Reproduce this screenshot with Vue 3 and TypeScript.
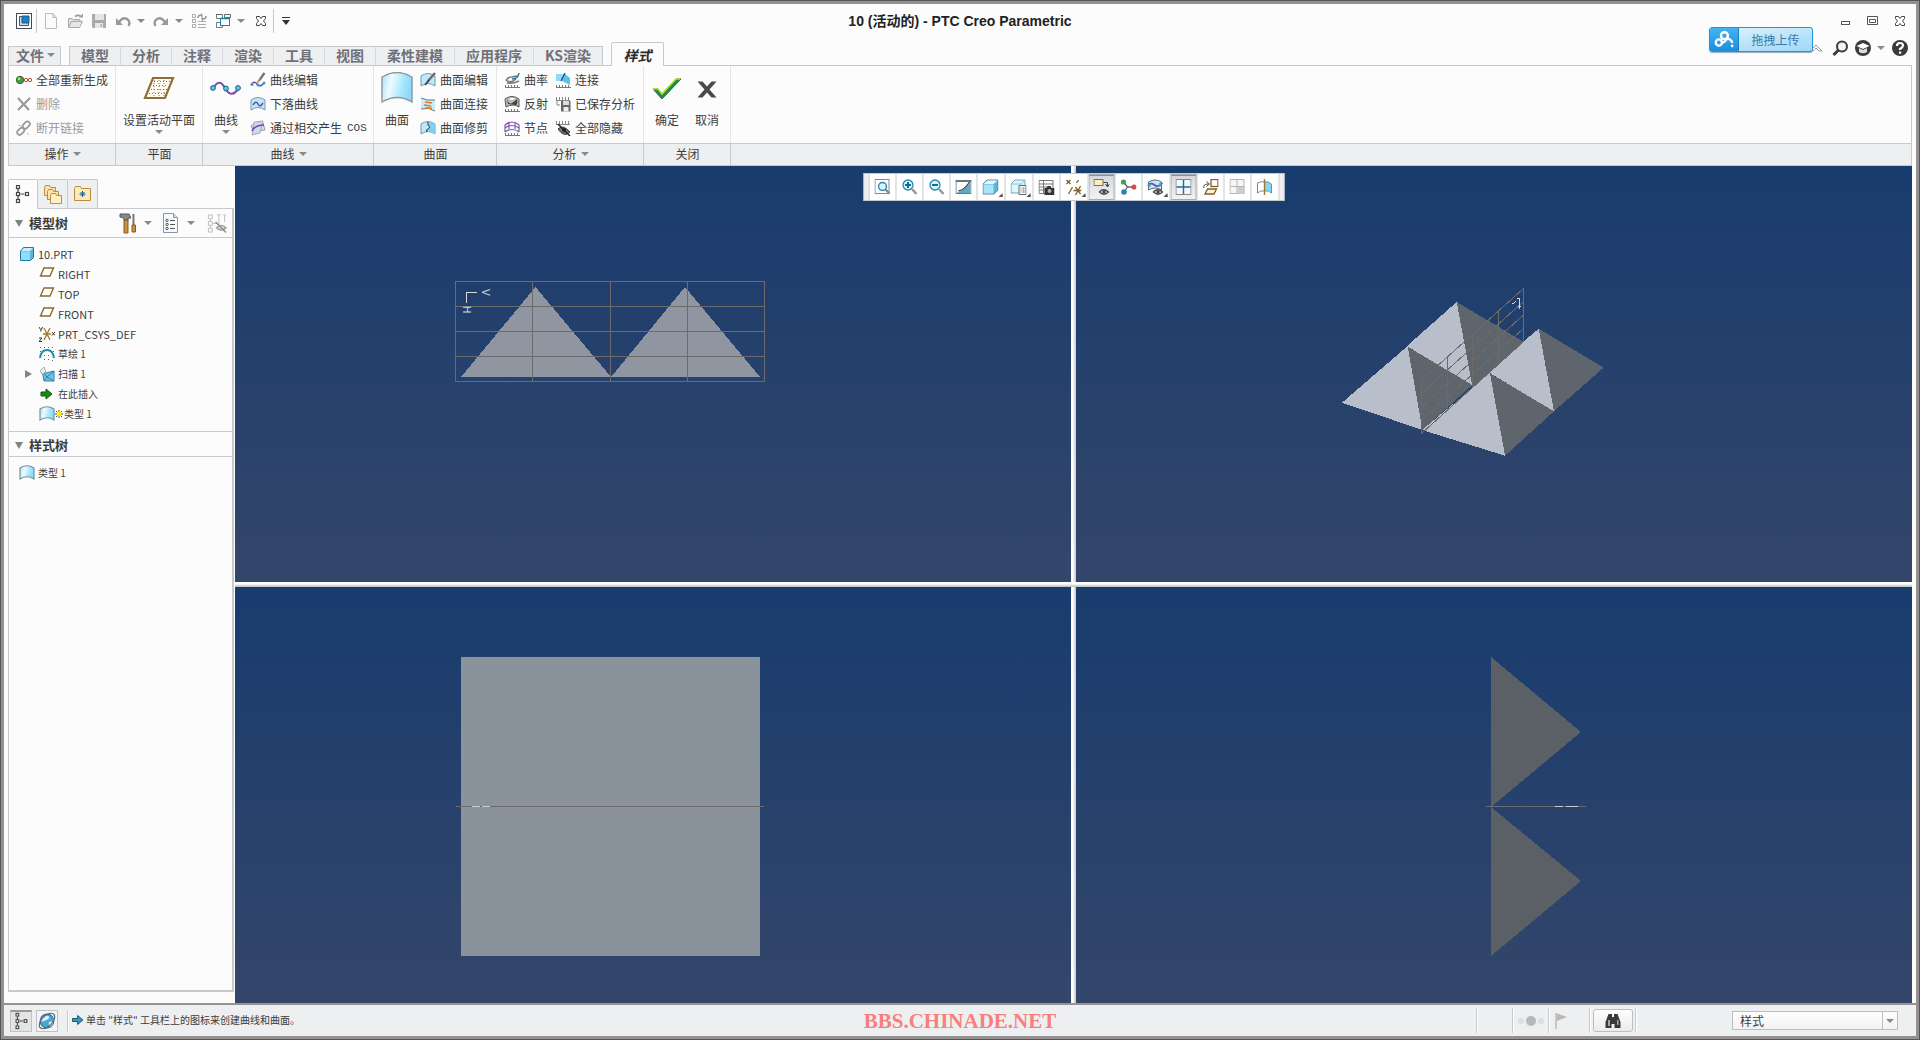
<script setup lang="ts">
import { ref } from 'vue'

interface Command {
  icon: string
  label: string
  suffix?: string
  disabled?: boolean
}

interface TreeItem {
  icon: string
  label: string
  cjk?: boolean
  expandable?: boolean
  fresh?: boolean
}

interface ViewTool {
  icon: string
  title: string
  menu?: boolean
  pressed?: boolean
}

const grad =
  '<linearGradient id="sky" x1="0" y1="0" x2="1" y2=".2"><stop offset="0" stop-color="#a6e0f7"/><stop offset=".35" stop-color="#effbff"/><stop offset=".8" stop-color="#9fe4fd"/><stop offset="1" stop-color="#8ddaf8"/></linearGradient>'

const ruler = '<path d="M1 15.5h15M1.5 15v-2M4.5 15v-2M7.5 15v-2M10.5 15v-2M13.5 15v-2" stroke="#777" fill="none"/>'
const rulerTop = '<path d="M1 4.5h14M1.5 4v-3M4.5 4v-3M7.5 4v-3M10.5 4v-3M13.5 4v-3" stroke="#888" fill="none"/>'
const eye = '<path d="M6 13q4-4.500 9 0q-4.500 4.500-9 0z" fill="#fff" stroke="#444" stroke-width="1.300"/><circle cx="10.500" cy="13" r="1.800" fill="#444"/>'
const sheet = '<path d="M1 4q7-5 14 0v10q-7-5-14 0z" fill="#bdeafa" stroke="#7b98a6"/>'

const icons: Record<string, string> = {
  app: '<rect x=".5" y=".5" width="15" height="15" fill="#fff" stroke="#3d4c5c"/><path d="M3.500 3.500h9v9h-9z" fill="#d8dde0" stroke="#35566e"/><path d="M6 3h7v7h-7z" fill="#0a86d8" stroke="#35566e"/>',
  newDoc: '<path d="M2.500.5h7.500l3.500 4v11h-11z" fill="#fafafa" stroke="#bbb"/><path d="M10 .5v4h3.500" fill="#ddd" stroke="#bbb"/>',
  open: '<path d="M1.500 14V5.500h4l1 1h6.500v2" fill="#ddd" stroke="#aaa"/><path d="M1.500 14.500l3-6h11l-3 6z" fill="#e6e6e6" stroke="#aaa"/><path d="M8 3.500q3-2 5.500-.5" stroke="#999" stroke-width="1.600" fill="none"/><path d="M12 4.500h4v-4z" fill="#999"/>',
  save: '<path d="M1 1h14v14h-13l-1-1z" fill="#aaa"/><path d="M4 1h9v6h-9z" fill="#e6e6e6"/><path d="M4 10h8v5h-8z" fill="#e8e8e8"/><path d="M9.500 11h1.500v3h-1.500z" fill="#aaa"/>',
  undo: '<path d="M4 9q4-5.500 8-3t1.500 7" fill="none" stroke="#999" stroke-width="2.400"/><path d="M1 5v7h7z" fill="#999"/>',
  redo: '<path d="M12 9q-4-5.500-8-3t-1.500 7" fill="none" stroke="#999" stroke-width="2.400"/><path d="M15 5v7h-7z" fill="#999"/>',
  regen: '<path d="M1.500 1.500h3v3h-3zM1.500 6.500h3v3h-3zM1.500 11.500h3v3h-3zM7 11.500h8M7 14.500h8M7 8.500h8" fill="none" stroke="#aaa"/><path d="M7 5q0-3 3-3M15 3q0 3-3 3" fill="none" stroke="#999" stroke-width="1.500"/><path d="M10 0v5l2-2.500zM12 3.500v5l-2-2.500z" fill="#999"/>',
  windows: '<path d="M1.500 1.500h6v4h-6zM1.500 9.500h6v5h-6z" fill="none" stroke="#777"/><path d="M9.500 1.500h6v3h-6zM1 1.500h6" fill="none" stroke="#666"/><rect x="5.500" y="5.500" width="9" height="7" fill="#fff" stroke="#1683a8"/><path d="M5 5.500h10" stroke="#1683a8" stroke-width="1.500"/>',
  closeOutline: '<path d="M3.500 3.500h3l1.500 2 1.500-2h3v2l-2 2.500 2 2.500v2h-3l-1.500-2-1.500 2h-3v-2l2-2.500-2-2.500z" fill="#fff" stroke="#444"/>',
  minimize: '<rect x="3.500" y="8.500" width="8" height="3" fill="#fff" stroke="#555"/>',
  maximize: '<path d="M2.500 3.500h10v8h-10zM4.500 6.500h6v3h-6z" fill="#fff" stroke="#555"/>',
  chevronUp: '<path d="M1 11l6-6 6 6h-3l-3-3-3 3z" fill="#fff" stroke="#999"/>',
  magnifier: '<circle cx="10" cy="6.500" r="5" fill="#eef6fb" stroke="#3b3b3b" stroke-width="2"/><path d="M6.500 10l-5 5" stroke="#3b3b3b" stroke-width="3"/>',
  learn: '<circle cx="8" cy="8" r="8" fill="#3b3b3b"/><path d="M1.500 6l6.500-3 6.500 3-6.500 3z" fill="#fff"/><path d="M4 8v4q4 2.500 8 0v-4l-4 2z" fill="#ddd"/>',
  help: '<circle cx="8" cy="8" r="8" fill="#3b3b3b"/><path d="M5 6q0-3 3-3t3 2.500q0 1.500-3 3.500v1" fill="none" stroke="#fff" stroke-width="2.200"/><rect x="7" y="11.500" width="2.200" height="2.200" fill="#fff"/>',
  cloud: '<g fill="none" stroke="#fff" stroke-width="2.800"><circle cx="8" cy="14.500" r="3.600"/><circle cx="14.500" cy="6.500" r="4"/><path d="M11 15q3 0 5-3t5-1q2.500 1.500 2.500 4"/></g><circle cx="23.500" cy="18.500" r="1.600" fill="#fff"/>',

  regenAll: '<circle cx="4" cy="8" r="3.700" fill="#4a9c3c" stroke="#2f6b28"/><circle cx="3" cy="6.800" r="1.300" fill="#b8e8a8"/><circle cx="10" cy="8" r="1.700" fill="#fff" stroke="#b04a38"/><circle cx="14" cy="8" r="1.700" fill="#fff" stroke="#b04a38"/><path d="M7 8h1.500M11.500 8h1" stroke="#b04a38"/>',
  remove: '<path d="M2 2l11 12M14 2l-12 12" stroke="#9a9a9a" stroke-width="2.200" fill="none"/>',
  unlink: '<g fill="none" stroke="#999" stroke-width="1.800"><rect x="8" y="1.500" width="5" height="8" rx="2.500" transform="rotate(45 11 5)"/><rect x="2.500" y="7.500" width="5" height="8" rx="2.500" transform="rotate(45 5 11)"/></g><path d="M2 5l3 1M11 13l2 2" stroke="#bbb"/>',
  curveEdit: '<path d="M1 13q3-5 6-1t7-1" fill="none" stroke="#6b48b0" stroke-width="1.400"/><circle cx="2" cy="12.500" r="1.500" fill="#2aa7d0"/><circle cx="8" cy="13" r="1.500" fill="#2aa7d0"/><circle cx="14" cy="11" r="1.500" fill="#2aa7d0"/><path d="M14.500 1l-5 7" stroke="#777" stroke-width="2.400"/><path d="M10 7l-2.500 3.500" stroke="#b98a50" stroke-width="2"/>',
  dropCurve: sheet + '<path d="M3 9q3-5 5-1t5-1" fill="none" stroke="#6b48b0" stroke-width="1.500"/>',
  cosCurve: '<path d="M1 6q6-5 12-3l2 7q-6-1-10 4z" fill="#bde8f8" stroke="#99a"/><path d="M4 2l9-1-3 12-8 2z" fill="#d5dade" fill-opacity=".8" stroke="#aab"/><path d="M2 11q3-6 12-6" stroke="#6b48b0" stroke-width="1.600" fill="none"/>',
  surfEdit: sheet + '<path d="M15 1L8 9" stroke="#6f6a64" stroke-width="2.400"/><path d="M9 8l-4 5" stroke="#444" stroke-width="2"/>',
  surfJoin: '<path d="M1 2q6 3 14 2v10q-6-3-14-1z" fill="#c5ecfa"/><path d="M1 2q6 3 14 2M1 13q8-2 14 2" fill="none" stroke="#678"/><path d="M5 6l7 1M4 9l7 1M5 12l7 0" stroke="#e87820" stroke-width="1.600"/>',
  surfTrim: sheet + '<path d="M8 2v3q3 2 0 4-2 1-1 3" fill="#fff" stroke="#455" stroke-width="1.300"/><path d="M9 2q4 0 6 2v10q-3-2-7-2 0-2 2-4 1-2-1-3z" fill="#7ad0f5"/>',
  curvature: ruler + '<path d="M2 9q1-4 6-4l5-1M3 11q6 1 12-2M3 9q5 2 9-2" fill="none" stroke="#777" stroke-width="1.400"/><path d="M8 7q6 0 7-6" fill="none" stroke="#1d7b9c" stroke-width="1.500"/>',
  reflect: ruler + '<path d="M1 3q7-5 14 0v8q-6-4-13 0z" fill="#bbb" stroke="#555"/><path d="M3 3q2 6 5 4t5-4q1 5-1 6l-8-1z" fill="#444"/><path d="M5 2q3 4 6 0z" fill="#fff"/>',
  knots: ruler + '<path d="M1 12V5q7-6 14 0v7M1 8q7-5 14 0M1 12q7-5 14 0M5 2.500V9M11 2.500V9" fill="none" stroke="#7f5aa8" stroke-width="1.200"/>',
  connect: '<path d="M1 2h9l-3 7h-6z" fill="#8edcfa"/><path d="M10 2l5 4v7l-8-4z" fill="#5cc0ec"/><path d="M10 1L6 9" stroke="#147" stroke-width="1.200"/>' + ruler,
  savedAnalysis: rulerTop + '<path d="M6 5h9.500v10.500h-9.500z" fill="#666"/><path d="M8 5h6v4h-6z" fill="#ddd"/><path d="M8.500 11h5v4.500h-5z" fill="#eee"/><path d="M2 5v4h3" stroke="#888" fill="none"/>',
  hideAll: rulerTop + '<path d="M3 9q5-5 12 3-6 6-12-3z" fill="#777" stroke="#333"/><circle cx="9" cy="10" r="2" fill="#222"/><path d="M3 4l12 12" stroke="#222" stroke-width="1.500"/>',

  tree: '<g transform="translate(1 -1)" fill="#fff" stroke="#444" stroke-width="1.200"><path d="M4 5v3M4 12v3M6.500 10h4" fill="none"/><rect x="2.500" y="1.500" width="3" height="3"/><rect x="2.500" y="8.500" width="3" height="3"/><rect x="2.500" y="15.500" width="3" height="3"/><rect x="11.500" y="8.500" width="3" height="3"/></g>',
  folders: '<g fill="#fbe3ab" stroke="#b98d3c"><path d="M1.500 3.500l1-2h4l1 2h5v8h-11z"/><path d="M4.500 7.500l1-2h4l1 2h5v8h-11z"/><path d="M7.500 11.500l1-2h4l1 2h5v8h-11z" fill="#fff0c8"/></g>',
  favorites: '<path d="M1.500 4.500l1-2h5l1 2h9v12h-16z" fill="#fbe9c0" stroke="#b98d3c"/><path d="M9.500 7v6M6.500 10h6M7.500 8l4 4M11.500 8l-4 4" stroke="#1d6484"/>',
  tools: '<path d="M5 6h4v14h-4z" fill="#c98f44" stroke="#8a5a22"/><path d="M1 1h9l2 4h-3v2h-4v-2l-4-1z" fill="#8a8a8a" stroke="#555"/><path d="M14.500 1v11" stroke="#777" stroke-width="2"/><path d="M13 12h3.500v7h-3.500z" fill="#c98f44" stroke="#8a5a22"/>',
  listDoc: '<path d="M1.500.5h10l4 4v15h-14z" fill="#f7fafc" stroke="#8897a3"/><path d="M11.500.5v4h4" fill="#cde" stroke="#8897a3"/><circle cx="5" cy="7.500" r="1.200" fill="none" stroke="#555"/><circle cx="5" cy="11.500" r="1.200" fill="none" stroke="#555"/><circle cx="5" cy="15.500" r="1.200" fill="none" stroke="#555"/><path d="M8 7.500h5M8 11.500h5M8 15.500h5" stroke="#555"/>',
  treeHide: '<g fill="none" stroke="#bbb"><path d="M1.500 1.500h4v4h-4zM1.500 8.500h4v4h-4zM1.500 15.500h4v4h-4zM3.500 6v2M3.500 13v2M6 10.500h4M10.500 1.500h4M12.500 2v9M17 1.500h3M18.500 2v7"/></g><path d="M10 15q5-5 10 0-5 5-10 0z" fill="#ddd" stroke="#999" stroke-width="1.300"/><path d="M9 9l11 11" stroke="#888" stroke-width="1.500"/>',
  part: '<path d="M1.500 5l3-3.500h10v10l-3 3h-10z" fill="#5bb7d9" stroke="#1b7ba0"/><path d="M2 5.500h9v8.500h-9z" fill="#8edcfa"/><path d="M2 5l3-3h9l-3 3z" fill="#c8effc"/>',
  datum: '<path d="M1.500 10l3.500-8h9.500l-3.500 8z" fill="#fff" stroke="#8a6a2c" stroke-width="1.400"/>',
  csys: '<path d="M4 8h8M5 2l6 12M11 2l-6 12" stroke="#a0782c" stroke-width="1.300" fill="none"/><path d="M0 1l1.500 2.500M3.500 1l-2 4.500M13 6l3 3.500M16 6l-3 3.500M0 12h3l-3 3.500h3" stroke="#333" fill="none"/>',
  sketch: '<path d="M1 12q1-8 7-8t7 8" fill="none" stroke="#2587b4" stroke-width="2"/><g fill="#666"><path d="M1 1h1v1h-1zM5 1h1v1h-1zM9 1h1v1h-1zM13 1h1v1h-1zM1 5h1v1h-1zM14 5h1v1h-1zM5 9h1v1h-1zM9 9h1v1h-1zM5 13h1v1h-1zM9 13h1v1h-1zM13 14h1v1h-1z"/></g>',
  sweep: '<path d="M3 4l4 3 8-2v10h-10z" fill="#6cc3e4" stroke="#2c86aa"/><path d="M3 4l5 7 7-6M5 15l3-4 7 4" fill="none" stroke="#2c86aa"/><path d="M1 5l4-4 2 5-4 2z" fill="#eee" stroke="#aaa"/>',
  insert: '<path d="M2 6h5v-3l6 5-6 5v-3h-5z" fill="#1a8a14" stroke="#0b5c0a"/>',
  sheet: grad + '<path d="M1 3q7-4.500 14 0v11q-7-4.500-14 0z" fill="url(#sky)" stroke="#7c909c" stroke-width="1.200"/>',
  bigSheet: grad + '<path d="M1 5q15-9 30 0v25q-15-9-30 0z" fill="url(#sky)" stroke="#8b979e" stroke-width="1.400"/>',
  bigPlane: '<path d="M2 26l8-20h20l-8 20z" fill="#fffdf4" stroke="#8f7137" stroke-width="2.200"/><g stroke="#8f7137" stroke-dasharray="1 2" fill="none"><path d="M11 9.500h16M10 13.500h15M8 17.500h16M6 21.500h16M11 8v16M16 8v16M21 8v16"/></g>',
  bigCurve: '<g transform="translate(0 1)"><path d="M3 16q6-12 12-1t13 1" fill="none" stroke="#7a55b5" stroke-width="2.200"/><g fill="#58c8ee" stroke="#16607e"><circle cx="3" cy="15" r="2.400"/><circle cx="16" cy="15.500" r="2.400"/><circle cx="28" cy="15" r="2.400"/></g></g>',
  bigCheck: '<g transform="translate(0 2)"><path d="M2 15h5l4 5L25 5h5L11 25z" fill="#1f8a50" stroke="#247a3c"/><path d="M2 15h5l4 5L25 5h4" fill="none" stroke="#b9e01c" stroke-width="1.500"/></g>',
  bigCross: '<path d="M6.500 9.500h5l4.500 5 4.500-5h5l-7 8 7 8h-5l-4.500-5-4.500 5h-5l7-8z" fill="#4a4a4a"/>',

  zoomFit: '<rect x=".5" y=".5" width="14" height="14" fill="#fff" stroke="#888"/><circle cx="8" cy="7.500" r="4" fill="#d9f2fc" stroke="#2586ac" stroke-width="1.400"/><path d="M11 10.500l4 4" stroke="#888" stroke-width="2.400"/>',
  zoomIn: '<circle cx="6.500" cy="6" r="5" fill="#d9f2fc" stroke="#2586ac" stroke-width="1.300"/><path d="M6.500 3v6M3.500 6h6" stroke="#0d6f98" stroke-width="2"/><path d="M10.500 10l4.500 5" stroke="#999" stroke-width="2.600"/>',
  zoomOut: '<circle cx="6.500" cy="6" r="5" fill="#d9f2fc" stroke="#2586ac" stroke-width="1.300"/><path d="M3.500 6h6" stroke="#0d6f98" stroke-width="2"/><path d="M10.500 10l4.500 5" stroke="#999" stroke-width="2.600"/>',
  repaint: '<rect x=".5" y="1.500" width="15" height="13" fill="#fff" stroke="#678"/><path d="M15 3v11h-14q9-3 14-11z" fill="#5fa9c2"/><path d="M3 12q6-1 11-9" stroke="#345" fill="none" stroke-width="1.300"/><path d="M0 2h16" stroke="#678" stroke-width="2"/>',
  shading: '<path d="M.5 5l4-4h11v10l-4 4h-11z" fill="#5bb7d9" stroke="#5f8496"/><path d="M1 5.500h10v9h-10z" fill="#a8e4fa"/><path d="M1 5l4-3.500h10l-4 3.500z" fill="#e3f8fe"/>',
  savedView: '<path d="M.5 5l4-4h10v9l-4 4h-10z" fill="#dff5fd" stroke="#6aa9c4"/><path d="M.5 5h10v9M10.500 5l4-4" fill="none" stroke="#8cc6dd"/><path d="M8.500 6.500h7v9h-7z" fill="#fff" stroke="#666"/><path d="M10 9h1M12 9h2M10 11h1M12 11h2M10 13h1M12 13h2" stroke="#666"/>',
  viewManager: '<path d="M.5 1.500h14v13h-14zM.5 5h14M.5 8h8M.5 11h6M5 1.500v13" fill="#fff" stroke="#777"/><path d="M6 9h2l1-2h3l1 2h3v7h-10z" fill="#333"/><circle cx="11" cy="12" r="2" fill="#9bb"/>',
  datumDisplay: '<path d="M1 1l4 4M5 1l-4 4M13 1l-2 3M7 8l-4 7M10 8l5 7M15 7l-5 9M8 11.500h8" stroke="#7d6128" stroke-width="1.300" fill="none"/>',
  annotation: '<rect x=".5" y=".5" width="9" height="6" fill="#fdebc6" stroke="#8a713f"/><path d="M10 3.500h4v4M12 5l2 3 2-3" fill="none" stroke="#444"/>' + eye,
  spin: '<path d="M3 3l4 5M7 8h7M7 8l-4 6" stroke="#666" stroke-width="1.300"/><circle cx="3" cy="3" r="2.600" fill="#4a9a50"/><circle cx="13.500" cy="8" r="2.600" fill="#cc5045"/><circle cx="3.500" cy="13" r="2.800" fill="#2c84ac"/>',
  styleDisplay: '<path d="M1 3q7-4 13 0v8q-6-4-13 0z" fill="#bdeafa" stroke="#666"/><path d="M0 7q3-4 7-1t8-2" fill="none" stroke="#6b48b0" stroke-width="1.600"/><circle cx="2" cy="6" r="1.500" fill="#2aa7d0"/><circle cx="13" cy="5" r="1.500" fill="#2aa7d0"/>' + eye,
  fourViews: '<rect x=".5" y=".5" width="15" height="15" fill="#f2f8fb" stroke="#888"/><path d="M8 1v14M1 8h14" stroke="#1c6e96" stroke-width="1.400"/>',
  activePlane: '<rect x="8.500" y=".5" width="7" height="7" fill="#fff" stroke="#7d6128" stroke-width="1.300"/><path d="M2.500 15l2.500-5h9l-2.500 5z" fill="#fff3d8" stroke="#7d6128" stroke-width="1.300"/><path d="M1.500 9q-1-4 4-4M4 2.500l3 2.500-3 2.500" fill="none" stroke="#444"/>',
  nextView: '<rect x=".5" y=".5" width="14" height="14" fill="#f6f6f6" stroke="#b5b5b5"/><path d="M7.500 1v14M1 7.500h14" stroke="#b5b5b5"/><path d="M8 8h7v7h-7z" fill="#ccc"/>',
  mirror: '<path d="M1 4q4-2 7-1v9q-4-1-7 2z" fill="#fff" stroke="#789"/><path d="M8 3q4-1 7 2v9q-3-3-7-2z" fill="#87d6f5" stroke="#4b9ab9"/><path d="M8 0v16" stroke="#a0782c" stroke-width="1.400"/>',

  browser: '<circle cx="8.500" cy="8.500" r="6.500" fill="#48a9d8" stroke="#2577a5"/><path d="M4 5q4-3 6-1t-3 4-4 0zM10 10q3-2 4 0t-3 4z" fill="#d8f0fa"/><ellipse cx="8.500" cy="8.500" rx="9" ry="5" transform="rotate(-45 8.500 8.500)" fill="none" stroke="#666" stroke-width="1.100"/>',
  message: '<path d="M.5 6h7v-4l7 6-7 6v-4h-7z" fill="#2e9cc4" stroke="#12485c" stroke-width="1.200"/>',
  signal: '<circle cx="3" cy="8" r="3" fill="#dcdedf"/><circle cx="13" cy="8" r="5" fill="#b6b8b9"/><circle cx="23" cy="8" r="3" fill="#dcdedf"/>',
  flag: '<path d="M2 16V0" stroke="#bbb" stroke-width="1.600"/><path d="M3 .5l10 3.500-10 4z" fill="#b8b8b8"/>',
  binoculars: '<path d="M3.500 1h3.500v3h2v-3h3.500l3 8v6h-6v-4h-3v4h-6v-6z" fill="#3a3a3a"/><path d="M3 7h2v6h-2zM12 7h1.500v5h-1.500z" fill="#a5a5a5"/>',
}

const tabs = ['模型', '分析', '注释', '渲染', '工具', '视图', '柔性建模', '应用程序', 'KS渲染']
const activeView = ref('曲面')

const operations: Command[] = [
  { icon: 'regenAll', label: '全部重新生成' },
  { icon: 'remove', label: '删除', disabled: true },
  { icon: 'unlink', label: '断开链接', disabled: true },
]
const curves: Command[] = [
  { icon: 'curveEdit', label: '曲线编辑' },
  { icon: 'dropCurve', label: '下落曲线' },
  { icon: 'cosCurve', label: '通过相交产生', suffix: 'COS' },
]
const surfaces: Command[] = [
  { icon: 'surfEdit', label: '曲面编辑' },
  { icon: 'surfJoin', label: '曲面连接' },
  { icon: 'surfTrim', label: '曲面修剪' },
]
const analysisA: Command[] = [
  { icon: 'curvature', label: '曲率' },
  { icon: 'reflect', label: '反射' },
  { icon: 'knots', label: '节点' },
]
const analysisB: Command[] = [
  { icon: 'connect', label: '连接' },
  { icon: 'savedAnalysis', label: '已保存分析' },
  { icon: 'hideAll', label: '全部隐藏' },
]

interface Group {
  key: string
  title: string
  menu?: boolean
  bigs: { icon: string; label: string; menu?: boolean }[]
  columns: Command[][]
}

const groups: Group[] = [
  { key: 'operate', title: '操作', menu: true, bigs: [], columns: [operations] },
  { key: 'plane', title: '平面', bigs: [{ icon: 'bigPlane', label: '设置活动平面', menu: true }], columns: [] },
  { key: 'curve', title: '曲线', menu: true, bigs: [{ icon: 'bigCurve', label: '曲线', menu: true }], columns: [curves] },
  { key: 'surface', title: '曲面', bigs: [{ icon: 'bigSheet', label: '曲面' }], columns: [surfaces] },
  { key: 'analysis', title: '分析', menu: true, bigs: [], columns: [analysisA, analysisB] },
  {
    key: 'finish',
    title: '关闭',
    bigs: [
      { icon: 'bigCheck', label: '确定' },
      { icon: 'bigCross', label: '取消' },
    ],
    columns: [],
  },
]

const features: TreeItem[] = [
  { icon: 'datum', label: 'RIGHT' },
  { icon: 'datum', label: 'TOP' },
  { icon: 'datum', label: 'FRONT' },
  { icon: 'csys', label: 'PRT_CSYS_DEF' },
  { icon: 'sketch', label: '草绘 1', cjk: true },
  { icon: 'sweep', label: '扫描 1', cjk: true, expandable: true },
  { icon: 'insert', label: '在此插入', cjk: true },
  { icon: 'sheet', label: '类型 1', cjk: true, fresh: true },
]

const viewTools: ViewTool[] = [
  { icon: 'zoomFit', title: '重新调整' },
  { icon: 'zoomIn', title: '放大' },
  { icon: 'zoomOut', title: '缩小' },
  { icon: 'repaint', title: '重画' },
  { icon: 'shading', title: '显示样式', menu: true },
  { icon: 'savedView', title: '已保存方向', menu: true },
  { icon: 'viewManager', title: '视图管理器' },
  { icon: 'datumDisplay', title: '基准显示', menu: true },
  { icon: 'annotation', title: '注释显示', pressed: true },
  { icon: 'spin', title: '旋转中心' },
  { icon: 'styleDisplay', title: '样式显示', menu: true },
  { icon: 'fourViews', title: '显示所有视图', pressed: true },
  { icon: 'activePlane', title: '活动平面方向' },
  { icon: 'nextView', title: '下一个视图' },
  { icon: 'mirror', title: '镜像' },
]

const mode = ref('样式')
</script>

<template>
  <div class="window">
    <header class="titlebar">
      <div class="quick">
        <button class="tool app" aria-label="窗口"><svg viewBox="0 0 16 16" v-html="icons.app" /></button>
        <i class="rule" />
        <button class="tool" aria-label="新建"><svg viewBox="0 0 16 16" v-html="icons.newDoc" /></button>
        <button class="tool" aria-label="打开"><svg viewBox="0 0 16 16" v-html="icons.open" /></button>
        <button class="tool" aria-label="保存"><svg viewBox="0 0 16 16" v-html="icons.save" /></button>
        <button class="tool menu" aria-label="撤消"><svg viewBox="0 0 16 16" v-html="icons.undo" /><i class="caret" /></button>
        <button class="tool menu" aria-label="重做"><svg viewBox="0 0 16 16" v-html="icons.redo" /><i class="caret" /></button>
        <button class="tool" aria-label="重新生成"><svg viewBox="0 0 16 16" v-html="icons.regen" /></button>
        <button class="tool menu" aria-label="切换窗口"><svg viewBox="0 0 16 16" v-html="icons.windows" /><i class="caret" /></button>
        <button class="tool" aria-label="关闭文件"><svg viewBox="0 0 16 16" v-html="icons.closeOutline" /></button>
        <i class="rule" />
        <button class="tool custom" aria-label="自定义"><i class="caret dark" /></button>
      </div>
      <h1>10 (活动的) - PTC Creo Parametric</h1>
      <div class="wincontrols">
        <button class="tool" aria-label="最小化"><svg viewBox="0 0 16 16" v-html="icons.minimize" /></button>
        <button class="tool" aria-label="最大化"><svg viewBox="0 0 16 16" v-html="icons.maximize" /></button>
        <button class="tool" aria-label="关闭"><svg viewBox="0 0 16 16" v-html="icons.closeOutline" /></button>
      </div>
    </header>

    <nav class="tabstrip">
      <button class="tab file">文件<i class="caret" /></button>
      <div class="tabgroup">
        <button v-for="t in tabs" :key="t" class="tab">{{ t }}</button>
      </div>
      <button class="tab active">样式</button>
      <div class="helpers">
        <button class="tool" aria-label="最小化功能区"><svg viewBox="0 0 16 16" v-html="icons.chevronUp" /></button>
        <button class="tool" aria-label="搜索"><svg viewBox="0 0 16 16" v-html="icons.magnifier" /></button>
        <button class="tool menu" aria-label="学习"><svg viewBox="0 0 16 16" v-html="icons.learn" /><i class="caret" /></button>
        <button class="tool" aria-label="帮助"><svg viewBox="0 0 16 16" v-html="icons.help" /></button>
      </div>
    </nav>
    <button class="upload">
      <span class="cloud"><svg viewBox="0 0 28 22" v-html="icons.cloud" /></span>
      <span class="uploadtext">拖拽上传</span>
    </button>

    <section class="ribbon">
      <div v-for="g in groups" :key="g.key" class="group" :class="g.key">
        <div class="groupbody">
          <button v-for="b in g.bigs" :key="b.label" class="big" @click="activeView = b.label">
            <svg viewBox="0 0 32 32" v-html="icons[b.icon]" />
            <span>{{ b.label }}</span>
            <i v-if="b.menu" class="caret" />
          </button>
          <div v-for="(col, i) in g.columns" :key="i" class="column">
            <button v-for="c in col" :key="c.label" class="command" :disabled="c.disabled">
              <svg viewBox="0 0 16 16" v-html="icons[c.icon]" />
              <span>{{ c.label }}</span>
              <span v-if="c.suffix" class="mono">{{ c.suffix }}</span>
            </button>
          </div>
        </div>
        <div class="grouptitle">{{ g.title }}<i v-if="g.menu" class="caret" /></div>
      </div>
      <div class="group rest">
        <div class="groupbody" />
        <div class="grouptitle" />
      </div>
    </section>

    <main class="work">
      <aside class="navigator">
        <div class="navtabs">
          <button class="navtab on" aria-label="模型树"><svg viewBox="0 0 20 20" v-html="icons.tree" /></button>
          <button class="navtab" aria-label="文件夹浏览器"><svg viewBox="0 0 20 20" v-html="icons.folders" /></button>
          <button class="navtab" aria-label="收藏夹"><svg viewBox="0 0 20 20" v-html="icons.favorites" /></button>
        </div>
        <div class="panel">
          <div class="panelhead tall">
            <i class="twisty" />
            <h2>模型树</h2>
            <button class="headtool" aria-label="设置"><svg viewBox="0 0 20 21" v-html="icons.tools" /><i class="caret" /></button>
            <button class="headtool" aria-label="显示"><svg viewBox="0 0 20 21" v-html="icons.listDoc" /><i class="caret" /></button>
            <button class="headtool last" aria-label="隐藏"><svg viewBox="0 0 21 21" v-html="icons.treeHide" /></button>
          </div>
          <ul class="treelist">
            <li class="root"><svg viewBox="0 0 16 16" v-html="icons.part" />10.PRT</li>
            <li v-for="f in features" :key="f.label" class="child" :class="{ cjk: f.cjk }">
              <i v-if="f.expandable" class="expander" />
              <svg viewBox="0 0 16 16" v-html="icons[f.icon]" />
              <svg v-if="f.fresh" class="spark" viewBox="0 0 8 8">
                <path d="M4 0v8M0 4h8M1 1l6 6M7 1L1 7" stroke="#444" stroke-width="1" />
                <circle cx="4" cy="4" r="2.4" fill="#fff200" />
              </svg>
              {{ f.label }}
            </li>
          </ul>
          <div class="panelhead short">
            <i class="twisty" />
            <h2>样式树</h2>
          </div>
          <ul class="treelist">
            <li class="root cjk"><svg viewBox="0 0 16 16" v-html="icons.sheet" />类型 1</li>
          </ul>
        </div>
      </aside>

      <section class="canvas">
        <div class="pane">
          <svg viewBox="0 0 836 416" shape-rendering="crispEdges">
            <path d="M226 211L300.500 121L376 211zM376 211L450 121L525 211z" fill="#8f96a2" />
            <path
              d="M220.500 115.500H529.500V215.500H220.500zM220.500 140.500H529.500M220.500 165.500H529.500M220.500 190.500H529.500M297.500 115.500V215.500M375.500 115.500V215.500M452.500 115.500V215.500"
              fill="none"
              stroke="#6c6b69"
            />
            <path d="M231.500 137V126.500H242" fill="none" stroke="#d8dade" />
            <text class="axis" transform="translate(247 126) rotate(90)" x="-3" y="0">V</text>
            <text class="axis" transform="translate(228 143) rotate(90)" x="-3" y="0">H</text>
          </svg>
        </div>
        <i class="split down" />
        <div class="pane right">
          <svg viewBox="0 0 836 416" shape-rendering="crispEdges">
            <g fill="#b8bfcb">
              <path d="M331 180L380.700 136L396.500 221z" />
              <path d="M266 236.700L331.700 180L346.500 264z" />
              <path d="M396 222L447 176L462.700 162.700L478 245.500L414 207z" />
              <path d="M346 264L414 207L429 289.700z" />
            </g>
            <g fill="#5e656c">
              <path d="M380.700 136L447.500 175.700L396.500 221z" />
              <path d="M331.700 180.700L396.300 219L346.500 264z" />
              <path d="M462.700 162.700L527.500 201.700L478 245.300z" />
              <path d="M414 207.300L478 245.300L429 289.700z" />
            </g>
            <path
              d="M345.700 214L447.500 122.500V175.700L345.700 267.300zM345.700 227L447.500 135.500M345.700 240.500L447.500 149M345.700 254L447.500 162.500M371.500 190.700V244M396.500 168V222M422.500 145V198"
              fill="none"
              stroke="#6c6b69"
            />
            <path d="M441 133l2-1M436 137h2l2-2M443.500 132v6M442 140h3M443.500 138v5" fill="none" stroke="#d8dade" />
          </svg>
        </div>
        <i class="split across" />
        <div class="pane lower">
          <svg viewBox="0 0 836 416" shape-rendering="crispEdges">
            <rect x="226" y="70" width="299" height="299" fill="#8a929c" />
            <path d="M221 219.500H529" stroke="#6c6b69" />
            <path d="M237 219.500h8M247 219.500h8" stroke="#c8ccd2" />
          </svg>
        </div>
        <div class="pane lower right">
          <svg viewBox="0 0 836 416" shape-rendering="crispEdges">
            <path d="M415 70L505 145L415 220zM415 220L505 294L415 369z" fill="#5b6067" />
            <path d="M410 219.500H510" stroke="#6c6b69" />
            <path d="M479 219.500h8M490 219.500h12" stroke="#c8ccd2" />
          </svg>
        </div>
        <div class="viewbar">
          <i class="grip" />
          <button
            v-for="v in viewTools"
            :key="v.icon"
            class="viewtool"
            :class="{ pressed: v.pressed, menu: v.menu }"
            :aria-label="v.title"
          >
            <svg viewBox="0 0 16 16" v-html="icons[v.icon]" />
          </button>
          <i class="grip" />
        </div>
      </section>
    </main>

    <footer class="status">
      <button class="toggle on" aria-label="导航器"><svg viewBox="-1 -1 20 20" v-html="icons.tree" /></button>
      <button class="toggle" aria-label="浏览器"><svg viewBox="0 0 17 17" v-html="icons.browser" /></button>
      <i class="tick" />
      <p><svg viewBox="0 0 16 16" v-html="icons.message" />单击 "样式" 工具栏上的图标来创建曲线和曲面。</p>
      <strong class="site">BBS.CHINADE.NET</strong>
      <div class="indicators">
        <span class="cell" />
        <span class="cell signal"><svg viewBox="0 0 26 16" v-html="icons.signal" /></span>
        <span class="cell flag"><svg viewBox="0 0 16 16" v-html="icons.flag" /></span>
        <span class="cell find">
          <button aria-label="查找"><svg viewBox="0 0 16 16" v-html="icons.binoculars" /></button>
        </span>
        <span class="cell filter">
          <select v-model="mode" aria-label="选择过滤器">
            <option>样式</option>
          </select>
          <span class="drop"><i class="caret" /></span>
        </span>
      </div>
    </footer>
  </div>
</template>

<style>
body {
  margin: 0;
}
</style>

<style scoped>
* {
  box-sizing: border-box;
}
.window {
  position: relative;
  display: flex;
  flex-direction: column;
  min-height: 100vh;
  padding: 3px;
  border: 1px solid #555;
  background: #fcfcfc;
  box-shadow: inset 0 0 0 3px #949090;
  color: #3c3c3c;
  font: 12px/16px 'Noto Sans CJK SC', sans-serif;
}
button {
  margin: 0;
  padding: 0;
  border: 0;
  background: none;
  color: inherit;
  font: inherit;
}
svg {
  display: block;
  flex: none;
}
.caret {
  width: 0;
  height: 0;
  border: 4px solid transparent;
  border-top-color: #8a8a8a;
  border-bottom: 0;
  flex: none;
}
.caret.dark {
  border-top: 5px solid #333;
}

/* title bar */
.titlebar {
  display: grid;
  grid-template-columns: 1fr auto 1fr;
  align-items: center;
  height: 38px;
  padding: 0 8px 5px;
}
.titlebar h1 {
  margin: 0;
  color: #222;
  font: bold 14px/20px 'Liberation Sans', 'Noto Sans CJK SC', sans-serif;
}
.quick {
  display: flex;
  align-items: center;
  gap: 8px;
}
.tool {
  display: flex;
  align-items: center;
  gap: 6px;
}
.tool svg {
  width: 16px;
  height: 16px;
}
.quick .app {
  margin: 0 -4px 0 4px;
}
.rule {
  width: 1px;
  height: 24px;
  margin-right: -2px;
  background: #c8c8cc;
}
.tool + .rule:not(.app + .rule) {
  margin: 0 0 0 -4px;
}
.custom {
  padding-top: 2px;
  border-top: 1px solid #333;
}
.wincontrols {
  display: flex;
  justify-content: flex-end;
  gap: 11px;
}

/* tabs */
.tabstrip {
  display: flex;
  align-items: flex-end;
  height: 23px;
  margin: 0 4px;
}
.tab {
  display: flex;
  align-items: center;
  justify-content: center;
  height: 19px;
  padding: 0 11px 2px;
  color: #707078;
  font-weight: bold;
  font-size: 14px;
  line-height: 16px;
}
.file {
  gap: 3px;
  width: 53px;
  padding: 0 0 2px 2px;
  border: 1px solid #c6c9cd;
  border-bottom: 0;
  background: #edeff1;
}
.tabgroup {
  display: flex;
  margin-left: 8px;
  border: 1px solid #c6c9cd;
  border-bottom: 0;
  background: #edeff1;
}
.tabgroup .tab {
  height: 18px;
}
.tabgroup .tab + .tab {
  border-left: 1px solid #d6d8db;
}
.active {
  position: relative;
  z-index: 1;
  width: 53px;
  height: 24px;
  margin: 0 0 -1px 8px;
  padding: 0;
  border: 1px solid #c6c9cd;
  border-bottom: 0;
  border-radius: 2px 2px 0 0;
  background: #fcfcfc;
  color: #2c2c2c;
  font-style: italic;
}
.helpers {
  display: flex;
  align-items: center;
  gap: 7px;
  align-self: flex-start;
  height: 12px;
  margin-left: auto;
  padding-right: 4px;
}
.upload {
  position: absolute;
  top: 26px;
  right: 106px;
  display: flex;
  width: 104px;
  height: 25px;
  border: 1px solid #2a93d8;
  border-radius: 3px;
  background: linear-gradient(170deg, #e4f4fd, #b7e2f9 60%, #9fd8f8);
  color: #3c78a8;
  box-shadow: 0 1px 1px #9ab;
}
.cloud {
  display: grid;
  place-items: center;
  width: 29px;
  height: 23px;
  border-right: 1px solid #1a83cc;
  background: linear-gradient(#45b2f3, #1b8edd);
}
.cloud svg {
  width: 24px;
  height: 19px;
}
.uploadtext {
  flex: 1;
  line-height: 24px;
}

/* ribbon */
.ribbon {
  display: flex;
  margin: 0 4px;
  border: 1px solid #c6c9cd;
}
.group {
  display: flex;
  flex-direction: column;
}
.groupbody {
  display: flex;
  height: 77px;
  border-right: 1px solid #e4e6e8;
}
.grouptitle {
  display: flex;
  align-items: center;
  justify-content: center;
  gap: 4px;
  height: 22px;
  padding: 0 0 2px 1px;
  border-top: 1px solid #c6c9cd;
  border-right: 1px solid #c6c9cd;
  background: #edeff1;
}
.rest {
  flex: 1;
}
.rest > div {
  border-right: 0;
}
.operate {
  width: 107px;
}
.plane,
.finish {
  width: 87px;
}
.curve {
  width: 171px;
}
.surface {
  width: 123px;
}
.analysis {
  width: 147px;
}
.column {
  padding-top: 2px;
  margin-left: 7px;
}
.command {
  display: flex;
  align-items: center;
  gap: 4px;
  height: 24px;
  white-space: nowrap;
}
.command svg {
  width: 16px;
  height: 16px;
}
.command:disabled {
  color: #9b9b9b;
}
.mono {
  margin-left: 1px;
  font: 11px/16px 'Liberation Mono', monospace;
}
.big {
  display: flex;
  flex-direction: column;
  align-items: center;
  height: 77px;
  padding-top: 6px;
  white-space: nowrap;
}
.big svg {
  width: 32px;
  height: 32px;
}
.big span {
  margin-top: 8px;
}
.big .caret {
  margin-top: 2px;
}
.plane .big {
  flex: 1;
}
.curve .big {
  margin: 0 1px 0 7px;
}
.surface .big {
  margin-left: 7px;
}
.surface .column {
  margin-left: 7px;
}
.analysis .column + .column {
  margin-left: 7px;
}
.finish .groupbody {
  gap: 8px;
  padding-left: 7px;
}

/* navigator */
.work {
  display: flex;
  flex: 1;
  margin-right: 4px;
}
.navigator {
  display: flex;
  flex: none;
  flex-direction: column;
  width: 231px;
  padding: 13px 1px 11px 4px;
}
.navtabs {
  display: flex;
  height: 29px;
}
.navtab {
  display: grid;
  place-items: center;
  width: 30px;
  height: 29px;
  border: 1px solid #c6c9cd;
  border-bottom: 0;
  border-radius: 2px 2px 0 0;
  background: #edeff1;
}
.navtab + .navtab {
  border-left: 0;
}
.navtab.on {
  position: relative;
  height: 30px;
  background: #fcfcfc;
}
.navtab svg {
  width: 20px;
  height: 20px;
}
.panel {
  flex: 1;
  border: 1px solid #c6c9cd;
  border-width: 1px 2px 2px 1px;
}
.panelhead {
  display: flex;
  align-items: center;
  padding-left: 6px;
  border-bottom: 1px solid #c6c9cd;
}
.tall {
  height: 29px;
}
.short {
  height: 26px;
  padding-top: 2px;
  border-top: 1px solid #c6c9cd;
}
.panelhead h2 {
  flex: 1;
  margin: 0 0 0 6px;
  font-size: 13px;
  line-height: 18px;
}
.twisty {
  border: 4px solid transparent;
  border-top: 7px solid #808285;
  border-bottom: 0;
}
.headtool {
  display: flex;
  align-items: center;
  gap: 5px;
  margin-right: 10px;
}
.headtool svg {
  width: 20px;
  height: 21px;
}
.headtool.last {
  margin: 0 5px 0 2px;
}
.treelist {
  margin: 0;
  padding: 6px 0 7px;
  list-style: none;
}
.treelist li {
  position: relative;
  display: flex;
  align-items: center;
  height: 20px;
  font-size: 11px;
}
.treelist li.cjk {
  font-size: 10px;
}
.root {
  padding-left: 10px;
  gap: 3px;
}
.child {
  padding-left: 30px;
  gap: 3px;
}
.treelist svg {
  width: 16px;
  height: 16px;
}
.treelist .spark {
  width: 8px;
  height: 8px;
  margin: 0 -2px 0 -3px;
}
.expander {
  position: absolute;
  left: 16px;
  border: 4px solid transparent;
  border-left: 7px solid #808285;
  border-right: 0;
}

/* graphics */
.canvas {
  position: relative;
  display: grid;
  flex: 1;
  grid-template-columns: 1fr 5px 1fr;
  grid-template-rows: 1fr 5px 1fr;
}
.pane {
  position: relative;
  grid-area: 1 / 1;
  min-height: 200px;
  background: linear-gradient(#183c6e, #34466a);
}
.pane.right {
  grid-column: 3;
}
.pane.lower {
  grid-row: 3;
}
.pane svg {
  position: absolute;
  inset: 0;
  width: 100%;
  height: 100%;
}
.axis {
  fill: #d8dade;
  font: 10px 'Liberation Sans', sans-serif;
}
.down {
  grid-area: 1 / 2 / 4 / 3;
  background: linear-gradient(90deg, #fff 35%, #c0c8ce);
}
.across {
  grid-area: 2 / 1 / 3 / 4;
  background: linear-gradient(#fff 35%, #b4bcbc);
}
.viewbar {
  position: absolute;
  top: 7px;
  left: 50%;
  display: flex;
  height: 28px;
  border: 1px solid #c6c9cd;
  background: #fff;
  transform: translateX(-50%);
}
.grip {
  width: 4px;
  background: #edeff1;
}
.viewtool {
  position: relative;
  display: grid;
  place-items: center;
  width: 27px;
  border-left: 1px solid #c6c9cd;
}
.viewtool:last-of-type {
  width: 29px;
  border-right: 1px solid #c6c9cd;
}
.viewtool svg {
  width: 16px;
  height: 16px;
}
.viewtool.menu {
  width: 28px;
}
.viewtool.menu::after {
  position: absolute;
  right: 2px;
  bottom: 3px;
  border: 2px solid #555;
  border-top-color: transparent;
  border-left-color: transparent;
  content: '';
}
.viewtool.pressed {
  background: linear-gradient(#d4d7da, #f2f3f4);
  box-shadow: inset 0 0 0 1px #a9acaf, inset 0 2px 0 #909396;
}

/* status bar */
.status {
  position: relative;
  display: flex;
  align-items: center;
  height: 33px;
  padding-left: 6px;
  border-top: 2px solid #949494;
  background: #edeff1;
}
.toggle {
  display: grid;
  place-items: center;
  width: 22px;
  height: 22px;
  margin-right: 4px;
  border: 1px solid #c0c3c6;
  background: #f4f5f6;
}
.toggle.on {
  border-top: 2px solid #999;
  background: #e2e4e6;
}
.toggle svg {
  width: 18px;
  height: 18px;
}
.tick {
  width: 2px;
  height: 22px;
  margin: 0 3px 0 5px;
  border-left: 1px solid #c6c9cd;
  background: #fff;
}
.status p {
  display: flex;
  gap: 2px;
  margin: 0;
  padding-bottom: 1px;
  font-size: 10px;
  white-space: pre;
}
.status p svg {
  width: 12px;
  height: 16px;
}
.site {
  position: absolute;
  left: 50%;
  color: #f97f7f;
  font: bold 21px/24px 'Liberation Serif', serif;
  transform: translateX(-50%);
}
.indicators {
  display: flex;
  align-items: center;
  height: 25px;
  margin-left: auto;
  padding-right: 18px;
}
.cell {
  display: flex;
  align-items: center;
  width: 36px;
  height: 25px;
  border-left: 1px solid #c6c9cd;
  box-shadow: inset 1px 0 0 #fff;
}
.signal {
  justify-content: center;
}
.signal svg {
  width: 26px;
  height: 16px;
}
.flag {
  width: 41px;
  padding-left: 5px;
}
.flag svg {
  width: 16px;
  height: 16px;
}
.find {
  width: 46px;
  padding-left: 3px;
}
.find button {
  display: grid;
  place-items: center;
  width: 40px;
  height: 23px;
  border: 1px solid #bbbec2;
  border-radius: 3px;
  background: linear-gradient(#fdfdfd, #ececec);
}
.find svg {
  width: 16px;
  height: 16px;
}
.filter {
  position: relative;
  width: 263px;
  padding-left: 96px;
}
.filter select {
  width: 166px;
  height: 19px;
  padding: 0 7px;
  border: 1px solid #b9bfc5;
  border-radius: 0;
  background: linear-gradient(#fff, #f2f2f2);
  color: #3c3c3c;
  font: 12px/16px 'Noto Sans CJK SC', sans-serif;
  appearance: none;
}
.drop {
  position: absolute;
  top: 4px;
  right: 1px;
  display: grid;
  place-items: center;
  width: 15px;
  height: 17px;
  border-left: 1px solid #b9bfc5;
  pointer-events: none;
}
</style>
